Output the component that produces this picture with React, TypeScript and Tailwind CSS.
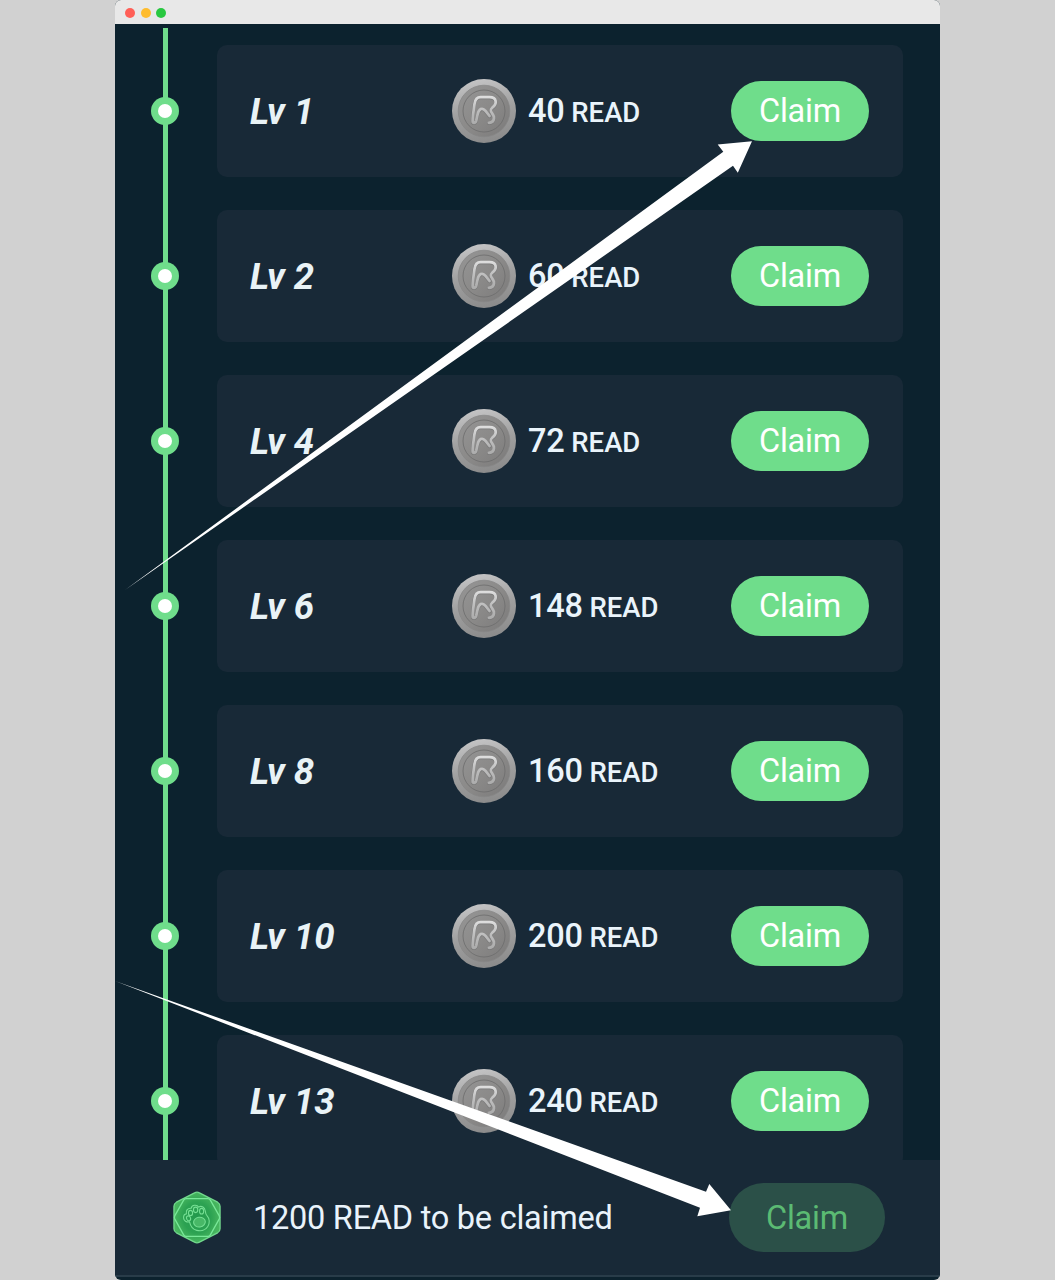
import React from 'react';

interface Level {
  level: number;
  reward: number;
}

const LEVELS: Level[] = [
  { level: 1, reward: 40 },
  { level: 2, reward: 60 },
  { level: 4, reward: 72 },
  { level: 6, reward: 148 },
  { level: 8, reward: 160 },
  { level: 10, reward: 200 },
  { level: 13, reward: 240 },
];

const Coin: React.FC = () => (
  <svg viewBox="0 0 64 64" className="size-16 shrink-0">
    <defs>
      <linearGradient id="coinRim" x1="0.4" y1="0" x2="0.6" y2="1">
        <stop offset="0" stopColor="#c4c4c5" />
        <stop offset="0.5" stopColor="#9f9f9f" />
        <stop offset="1" stopColor="#8b8b8b" />
      </linearGradient>
      <linearGradient id="coinFace" x1="0" y1="0" x2="1" y2="1">
        <stop offset="0" stopColor="#969696" />
        <stop offset="0.5" stopColor="#8b8a89" />
        <stop offset="1" stopColor="#7b7a7a" />
      </linearGradient>
      <linearGradient id="coinMark" x1="0" y1="17" x2="0" y2="45" gradientUnits="userSpaceOnUse">
        <stop offset="0" stopColor="#e0e0e0" />
        <stop offset="0.5" stopColor="#bdbdbd" />
        <stop offset="1" stopColor="#aaaaaa" />
      </linearGradient>
    </defs>
    <circle cx="32" cy="32" r="32" fill="url(#coinRim)" />
    <circle cx="32" cy="32" r="25.8" fill="url(#coinFace)" stroke="#858585" strokeWidth="0.7" />
    <circle cx="32" cy="32" r="21" fill="none" stroke="#6c6c6c" strokeWidth="0.8" />
    <g fill="none" strokeLinecap="round" strokeLinejoin="round" transform="translate(-1.9 -1.6) scale(1.06)">
      <path
        d="M21.2 42.8C20.6 40 22 32 22.8 25.8C23.4 21 25.2 19.2 28.8 19.2H37.2C44.2 19.2 44.6 25.6 39.8 29.2C37.6 31 38 32.4 39.8 34.8C43 39 41 43.4 36.6 43.4M21.2 42.8C22.4 44 24.2 43.2 24.6 41.6L25.8 36C27 30 30.6 28.6 33.4 32.2L37.2 37"
        stroke="#777777"
        strokeWidth="3"
      />
      <path
        d="M21.4 42.4C20.8 39.4 22.2 31.4 23 25.2C23.6 20.4 25.2 18.6 28.8 18.6H37.2C44.2 18.6 44.6 25 39.8 28.6C37.6 30.4 38 31.8 39.8 34.2C43 38.4 41 42.8 36.6 42.8M21.4 42.4C22.4 43.4 24.2 42.6 24.6 41L25.8 35.4C27 29.4 30.6 28 33.4 31.6L37.2 36.4"
        stroke="url(#coinMark)"
        strokeWidth="2.6"
      />
    </g>
  </svg>
);

const PawBadge: React.FC = () => (
  <svg viewBox="0 0 50 54" className="mb-px h-[53px] w-[50px] shrink-0">
    <defs>
      <radialGradient id="badgeFill">
        <stop offset="0" stopColor="#23994c" />
        <stop offset="0.6" stopColor="#2ca252" />
        <stop offset="1" stopColor="#48b65f" />
      </radialGradient>
    </defs>
    <g strokeLinejoin="round">
      <path
        d="M22.5 1.9Q25 .5 27.5 1.9L46 11.4Q48.5 12.8 48.5 15.5V38.5Q48.5 41.2 46 42.6L27.5 52.1Q25 53.5 22.5 52.1L4 42.6Q1.5 41.2 1.5 38.5V15.5Q1.5 12.8 4 11.4Z"
        fill="url(#badgeFill)"
        stroke="#72d98d"
        strokeWidth="1.3"
      />
      <path
        d="M14 7.7H36Q37.7 7.7 38.6 9.3L47.7 25.4Q48.4 27 47.7 28.4L38.6 44.7Q37.7 46.3 36 46.3H14Q12.3 46.3 11.4 44.7L2.3 28.4Q1.6 27 2.3 25.4L11.4 9.3Q12.3 7.7 14 7.7Z"
        fill="none"
        stroke="#79e899"
        strokeWidth="1.3"
      />
      <g fill="none" stroke="#76df94" strokeWidth="1.1" transform="translate(-1 0)">
        <path d="M18.4 31.4C15.2 32 12.5 30.4 12.3 27.4C12.2 24.8 13.8 23.4 15.2 23.3C14.4 19.8 16.6 17.4 20 17.6C20.8 14 25.9 13.6 27.7 16.4C30.6 14.4 34 17 34.4 20.4C34.6 22.6 34.9 24 36.5 25.5C39 27.9 39.1 33.2 37 36.2C34.8 39.5 30.4 41.2 25.8 40.1C21.3 39 19.4 36 18.4 31.4Z" />
        <ellipse cx="28.5" cy="31.7" rx="6" ry="5" transform="rotate(-8 28.5 31.7)" fill="#48b867" />
        <ellipse cx="17.4" cy="27.9" rx="2" ry="2.5" transform="rotate(-22 17.4 27.9)" />
        <ellipse cx="19.4" cy="22.4" rx="2.1" ry="2.7" />
        <ellipse cx="24.6" cy="19.2" rx="2.2" ry="2.8" />
        <ellipse cx="30.7" cy="20.6" rx="2.1" ry="2.9" />
      </g>
    </g>
  </svg>
);

const LevelRow: React.FC<Level> = ({ level, reward }) => (
  <li className="flex h-[132px] shrink-0 items-center">
    {/* Timeline marker */}
    <div className="relative z-10 mr-[38px] ml-9 flex size-7 items-center justify-center rounded-full bg-[#6fdd8b]">
      <span className="size-3.5 rounded-full bg-white" />
    </div>

    <div className="flex h-full w-[686px] items-center rounded-[10px] bg-[#182937] pr-[34px] pl-[33px]">
      <span className="w-[202px] pt-0.5 text-[36.5px] font-bold text-[#e9f3f6] italic">Lv {level}</span>
      <Coin />
      <div className="ml-3 flex-1 text-[32.5px] font-medium tracking-[-0.25px] whitespace-nowrap text-[#eaf4fb]">
        {reward} <span className="-ml-px text-[27.5px] tracking-normal">READ</span>
      </div>
      <button className="h-[60px] w-[138px] rounded-full bg-[#6fdd8b] pt-px text-[32.5px] tracking-[-0.25px] text-white">
        Claim
      </button>
    </div>
  </li>
);

export default function App() {
  return (
    <div className="h-[1280px] w-[1055px] overflow-hidden bg-[#d1d1d1] font-['Roboto',sans-serif]">
      <div className="relative mx-auto flex h-full w-[825px] flex-col overflow-hidden rounded-md bg-[#0c222e]">
        {/* Window title bar */}
        <div className="flex h-6 shrink-0 items-center gap-[5.5px] bg-[#e8e8e8] pt-0.5 pl-2.5">
          <span className="size-2.5 rounded-full bg-[#ff5f57]" />
          <span className="size-2.5 rounded-full bg-[#febc2e]" />
          <span className="size-2.5 rounded-full bg-[#28c840]" />
        </div>

        <div className="relative h-[1136px] shrink-0 overflow-hidden">
          <div className="absolute top-1 bottom-0 left-12 w-[5px] bg-[#70dc8c]" />
          <ul className="flex flex-col gap-[33px] pt-[21px]">
            {LEVELS.map((item) => (
              <LevelRow key={item.level} {...item} />
            ))}
          </ul>
        </div>

        {/* Claim all footer */}
        <div className="flex h-[115px] shrink-0 items-center bg-[#182937] pl-[57px]">
          <PawBadge />
          <p className="ml-[31px] w-[476px] pt-0.5 text-[32.5px] tracking-[-0.25px] whitespace-nowrap text-[#e9f3fb]">
            1200 READ to be claimed
          </p>
          <button className="h-[69px] w-[156px] rounded-full bg-[#2b5048] pt-0.5 text-[32.5px] tracking-[-0.25px] text-[#5bbb73]">
            Claim
          </button>
        </div>
        <div className="h-0.5 shrink-0 bg-[#293c49]" />

        {/* Arrows pointing at the claim buttons */}
        <svg viewBox="115 0 825 1280" className="pointer-events-none absolute inset-0 size-full" fill="white">
          <path d="M125 590L723.3 151.8L717.7 144.5L752 141.3L737.8 172.7L733 165.8Z" />
          <path d="M115 981L706 1191.7L709.3 1184L731 1210.2L697.3 1216.3L700 1207.7Z" />
        </svg>
      </div>
    </div>
  );
}
